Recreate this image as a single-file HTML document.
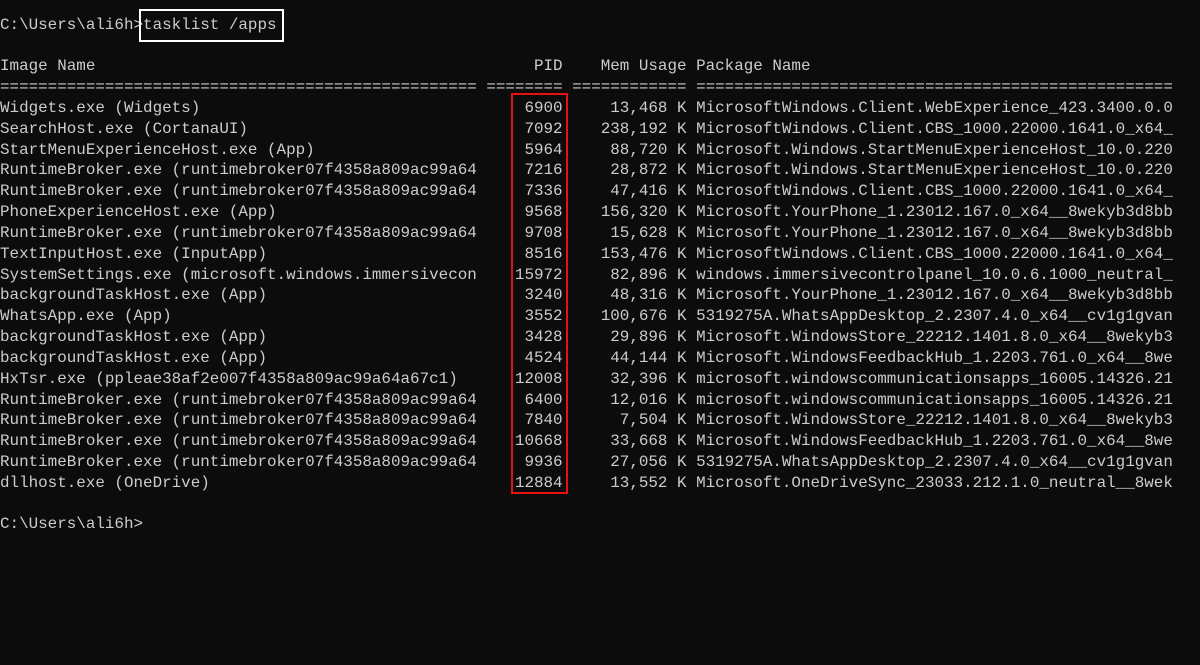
<!DOCTYPE html>
<html><head><meta charset="utf-8"><style>
html,body{margin:0;padding:0;background:#0c0c0c;width:1200px;height:665px;overflow:hidden}
.t{position:absolute;left:0;top:14.6px;font-family:"Liberation Mono",monospace;font-size:15.9px;line-height:20.83px;color:#cccccc}
.r{height:20.83px;white-space:pre}
.r span{display:inline-block;white-space:pre}
.n{width:50ch}.p{width:8ch;margin-left:1ch;text-align:right}.m{width:12ch;margin-left:1ch;text-align:right}.k{margin-left:1ch}
.box{position:absolute;box-sizing:border-box}
</style></head><body>
<div class="t"><div class="r">C:\Users\ali6h&gt;tasklist /apps</div><div class="r"></div><div class="r"><span class="n">Image Name</span><span class="p">PID</span><span class="m">Mem Usage</span><span class="k">Package Name</span></div><div class="r"><span class="n">==================================================</span><span class="p">========</span><span class="m">============</span><span class="k">==================================================</span></div><div class="r"><span class="n">Widgets.exe (Widgets)</span><span class="p">6900</span><span class="m">13,468 K</span><span class="k">MicrosoftWindows.Client.WebExperience_423.3400.0.0</span></div><div class="r"><span class="n">SearchHost.exe (CortanaUI)</span><span class="p">7092</span><span class="m">238,192 K</span><span class="k">MicrosoftWindows.Client.CBS_1000.22000.1641.0_x64_</span></div><div class="r"><span class="n">StartMenuExperienceHost.exe (App)</span><span class="p">5964</span><span class="m">88,720 K</span><span class="k">Microsoft.Windows.StartMenuExperienceHost_10.0.220</span></div><div class="r"><span class="n">RuntimeBroker.exe (runtimebroker07f4358a809ac99a64</span><span class="p">7216</span><span class="m">28,872 K</span><span class="k">Microsoft.Windows.StartMenuExperienceHost_10.0.220</span></div><div class="r"><span class="n">RuntimeBroker.exe (runtimebroker07f4358a809ac99a64</span><span class="p">7336</span><span class="m">47,416 K</span><span class="k">MicrosoftWindows.Client.CBS_1000.22000.1641.0_x64_</span></div><div class="r"><span class="n">PhoneExperienceHost.exe (App)</span><span class="p">9568</span><span class="m">156,320 K</span><span class="k">Microsoft.YourPhone_1.23012.167.0_x64__8wekyb3d8bb</span></div><div class="r"><span class="n">RuntimeBroker.exe (runtimebroker07f4358a809ac99a64</span><span class="p">9708</span><span class="m">15,628 K</span><span class="k">Microsoft.YourPhone_1.23012.167.0_x64__8wekyb3d8bb</span></div><div class="r"><span class="n">TextInputHost.exe (InputApp)</span><span class="p">8516</span><span class="m">153,476 K</span><span class="k">MicrosoftWindows.Client.CBS_1000.22000.1641.0_x64_</span></div><div class="r"><span class="n">SystemSettings.exe (microsoft.windows.immersivecon</span><span class="p">15972</span><span class="m">82,896 K</span><span class="k">windows.immersivecontrolpanel_10.0.6.1000_neutral_</span></div><div class="r"><span class="n">backgroundTaskHost.exe (App)</span><span class="p">3240</span><span class="m">48,316 K</span><span class="k">Microsoft.YourPhone_1.23012.167.0_x64__8wekyb3d8bb</span></div><div class="r"><span class="n">WhatsApp.exe (App)</span><span class="p">3552</span><span class="m">100,676 K</span><span class="k">5319275A.WhatsAppDesktop_2.2307.4.0_x64__cv1g1gvan</span></div><div class="r"><span class="n">backgroundTaskHost.exe (App)</span><span class="p">3428</span><span class="m">29,896 K</span><span class="k">Microsoft.WindowsStore_22212.1401.8.0_x64__8wekyb3</span></div><div class="r"><span class="n">backgroundTaskHost.exe (App)</span><span class="p">4524</span><span class="m">44,144 K</span><span class="k">Microsoft.WindowsFeedbackHub_1.2203.761.0_x64__8we</span></div><div class="r"><span class="n">HxTsr.exe (ppleae38af2e007f4358a809ac99a64a67c1)</span><span class="p">12008</span><span class="m">32,396 K</span><span class="k">microsoft.windowscommunicationsapps_16005.14326.21</span></div><div class="r"><span class="n">RuntimeBroker.exe (runtimebroker07f4358a809ac99a64</span><span class="p">6400</span><span class="m">12,016 K</span><span class="k">microsoft.windowscommunicationsapps_16005.14326.21</span></div><div class="r"><span class="n">RuntimeBroker.exe (runtimebroker07f4358a809ac99a64</span><span class="p">7840</span><span class="m">7,504 K</span><span class="k">Microsoft.WindowsStore_22212.1401.8.0_x64__8wekyb3</span></div><div class="r"><span class="n">RuntimeBroker.exe (runtimebroker07f4358a809ac99a64</span><span class="p">10668</span><span class="m">33,668 K</span><span class="k">Microsoft.WindowsFeedbackHub_1.2203.761.0_x64__8we</span></div><div class="r"><span class="n">RuntimeBroker.exe (runtimebroker07f4358a809ac99a64</span><span class="p">9936</span><span class="m">27,056 K</span><span class="k">5319275A.WhatsAppDesktop_2.2307.4.0_x64__cv1g1gvan</span></div><div class="r"><span class="n">dllhost.exe (OneDrive)</span><span class="p">12884</span><span class="m">13,552 K</span><span class="k">Microsoft.OneDriveSync_23033.212.1.0_neutral__8wek</span></div><div class="r"></div><div class="r">C:\Users\ali6h&gt;</div></div>
<div class="box" style="left:139px;top:9px;width:145px;height:33px;border:2px solid #fff"></div>
<div class="box" style="left:511px;top:93px;width:57px;height:401px;border:2px solid #e81010"></div>
</body></html>
